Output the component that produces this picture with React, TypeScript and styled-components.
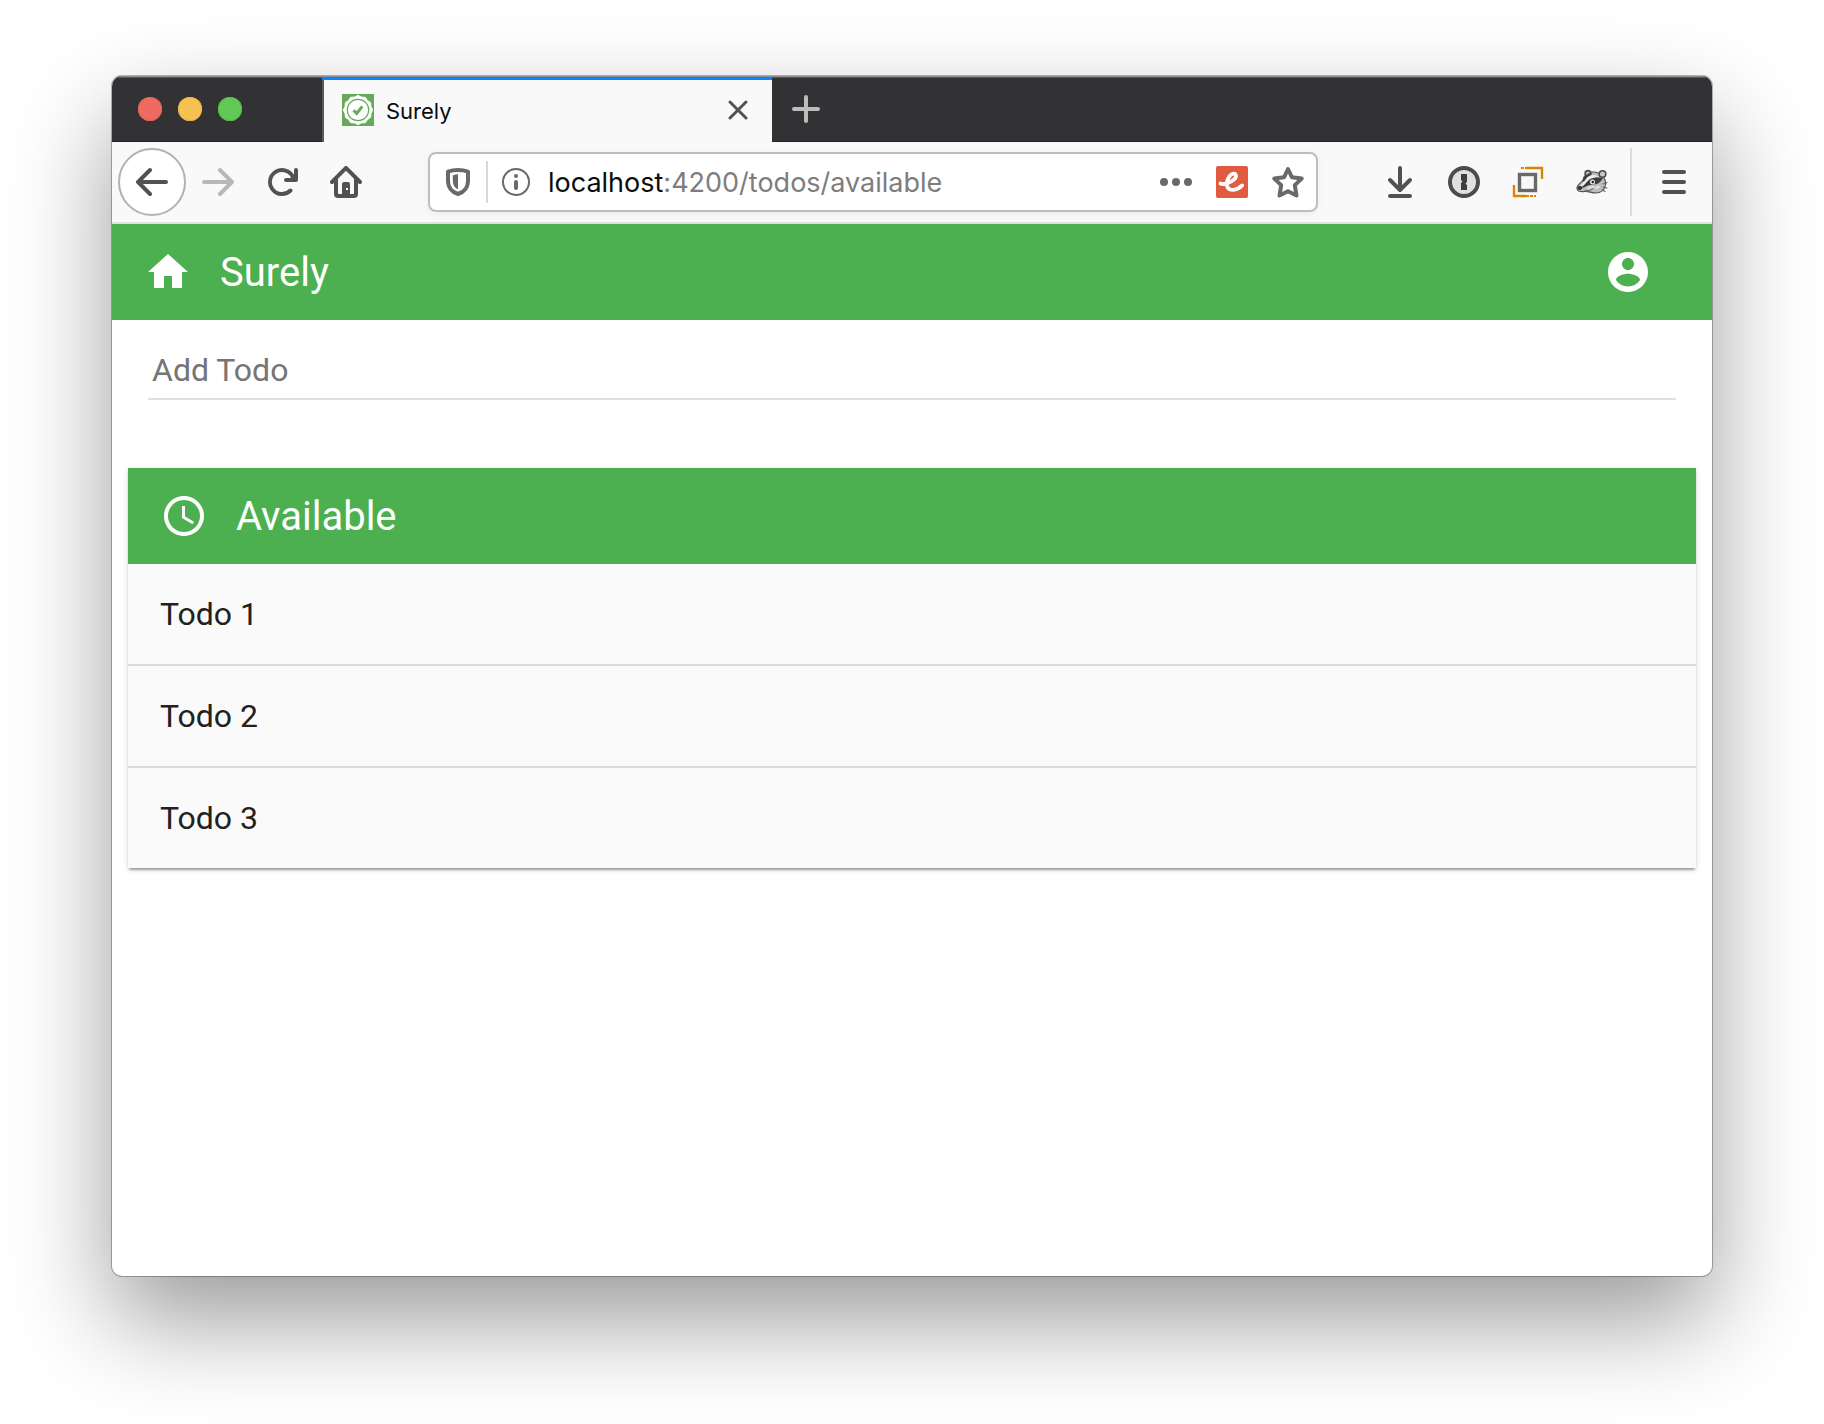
import React from "react";
import styled, { createGlobalStyle } from "styled-components";

const GlobalStyle = createGlobalStyle`
  *, *::before, *::after { box-sizing: border-box; }
  body { margin: 0; background: #fff; }
  button { border: 0; margin: 0; padding: 0; background: none; color: inherit; font: inherit; cursor: pointer; }
`;

const uiFont = `Inter, "Liberation Sans", sans-serif`;
const appFont = `Roboto, "Liberation Sans", sans-serif`;

const Desktop = styled.div`
  display: flex;
  min-height: 100vh;
  padding: 76px 112px 148px;
`;

const BrowserWindow = styled.div`
  flex: 1;
  min-width: 0;
  display: flex;
  flex-direction: column;
  overflow: hidden;
  border-radius: 10px;
  background: #fff;
  box-shadow: 0 0 0 1px rgba(0, 0, 0, 0.28), 0 44px 100px rgba(0, 0, 0, 0.4);
`;

const TabBar = styled.header`
  display: flex;
  align-items: center;
  height: 66px;
  background: #323234;
  box-shadow: inset 0 1px #8d8d8e, inset 0 2px #5b5b5d, inset 0 -1px #232325;
`;

const WindowControls = styled.div`
  display: flex;
  gap: 16px;
  width: 210px;
  padding-left: 26px;
`;

const WindowControl = styled.button<{ $color: string; $edge: string }>`
  width: 24px;
  height: 24px;
  border-radius: 50%;
  background: ${(p) => p.$color};
  box-shadow: inset 0 0 0 1px ${(p) => p.$edge};
`;

const Tab = styled.div`
  align-self: flex-end;
  display: flex;
  align-items: center;
  width: 450px;
  height: 65px;
  padding: 0 24px 2px 20px;
  border-top: 3px solid #0a84ff;
  background: #f9f9fa;
  box-shadow: inset 2px 0 #5a5a5c;
`;

const TabTitle = styled.span`
  flex: 1;
  margin-left: 12px;
  padding-top: 2px;
  font: 22px/28px ${uiFont};
  color: #0c0c0d;
`;

const IconButton = styled.button<{ $size: number; $color?: string }>`
  flex: none;
  display: flex;
  align-items: center;
  justify-content: center;
  width: ${(p) => p.$size}px;
  height: ${(p) => p.$size}px;
  color: ${(p) => p.$color ?? "#525255"};

  svg { display: block; }
`;

const Toolbar = styled.nav`
  display: flex;
  align-items: center;
  height: 82px;
  padding: 0 6px;
  border-bottom: 2px solid #e0e0e1;
  background: #f9f9fa;
`;

const BackButton = styled(IconButton)`
  border: 2px solid #b1b1b3;
  border-radius: 50%;
  background: #fff;
`;

const AddressBar = styled.div`
  flex: 1;
  min-width: 0;
  display: flex;
  align-items: center;
  height: 60px;
  margin: 0 50px;
  border: 2px solid #bebebe;
  border-radius: 8px;
  background: #fff;
  box-shadow: 0 2px 8px rgba(0, 0, 0, 0.05);
`;

const AddressDivider = styled.span`
  width: 2px;
  height: 42px;
  background: #d7d7db;
`;

const Address = styled.div`
  flex: 1;
  min-width: 0;
  overflow: hidden;
  white-space: nowrap;
  padding: 2px 0 0 4px;
  outline: none;
  font: 27px/36px ${uiFont};
  color: #0c0c0d;
`;

const AddressPath = styled.span`
  color: #7d7d7e;
`;

const ToolbarDivider = styled.span`
  width: 2px;
  height: 68px;
  margin: 0 10px 0 6px;
  background: #dcdcdd;
`;

const AppBar = styled.header<{ $wide?: boolean }>`
  display: flex;
  align-items: center;
  gap: 28px;
  height: 96px;
  padding: 0 ${(p) => (p.$wide ? 60 : 32)}px 0 32px;
  background: #4caf50;
  color: #fff;
`;

const HomeLink = styled.a`
  display: block;
  height: 48px;
  color: inherit;
`;

const BarTitle = styled.h1`
  flex: 1;
  margin: 0;
  padding-top: 2px;
  font: 400 40px/48px ${appFont};
`;

const CardTitle = styled(BarTitle).attrs({ as: "h2" })``;

const AddForm = styled.form`
  padding: 20px 36px 68px;
`;

const TodoInput = styled.input`
  display: block;
  width: 100%;
  height: 60px;
  padding: 2px 4px 0;
  border: 0;
  border-bottom: 2px solid #e0e0e0;
  outline: none;
  background: transparent;
  font: 32px/40px ${appFont};
  color: #212121;

  &::placeholder { color: #757575; opacity: 1; }
`;

const Card = styled.section`
  margin: 0 16px;
  background: #fafafa;
  box-shadow: 0 4px 2px -2px rgba(0, 0, 0, 0.2), 0 2px 2px rgba(0, 0, 0, 0.14), 0 2px 6px rgba(0, 0, 0, 0.12);
`;

const TodoList = styled.ul`
  margin: 0;
  padding: 0;
  list-style: none;
`;

const TodoRow = styled.li`
  padding: 30px 32px;
  font: 32px/40px ${appFont};
  color: #212121;

  & + & { border-top: 2px solid #dcdcdc; }
`;

const BackArrow = () => (
  <svg width="32" height="32" viewBox="0 0 16 16" fill="none" stroke="currentColor" strokeWidth="2" strokeLinecap="round" strokeLinejoin="round">
    <path d="M15 8H1.2M7 2L1 8l6 6" />
  </svg>
);

const ForwardArrow = () => (
  <svg width="32" height="32" viewBox="0 0 16 16" fill="none" stroke="currentColor" strokeWidth="2" strokeLinecap="round" strokeLinejoin="round">
    <path d="M1 8h13.8M9 2l6 6-6 6" />
  </svg>
);

const ReloadIcon = () => (
  <svg width="32" height="32" viewBox="0 0 16 16" fill="currentColor">
    <path d="M15 1a1 1 0 0 0-1 1v2.418A6.995 6.995 0 1 0 8 15a6.954 6.954 0 0 0 4.95-2.05 1 1 0 0 0-1.414-1.414A5.019 5.019 0 1 1 12.549 6H10a1 1 0 0 0 0 2h5a1 1 0 0 0 1-1V2a1 1 0 0 0-1-1z" />
  </svg>
);

const BrowserHomeIcon = () => (
  <svg width="32" height="32" viewBox="0 0 16 16" fill="currentColor" fillRule="evenodd">
    <path d="M15.707 7.293l-7-7a1 1 0 0 0-1.414 0l-7 7a1 1 0 0 0 1.414 1.414L2 8.414V14a2 2 0 0 0 2 2h8a2 2 0 0 0 2-2V8.414l.293.293a1 1 0 0 0 1.414-1.414zM12 13.5a.5.5 0 0 1-.5.5H10V9a1 1 0 0 0-1-1H7a1 1 0 0 0-1 1v5H4.5a.5.5 0 0 1-.5-.5V6.414l4-4 4 4zM8 11h1v1H8z" />
  </svg>
);

const ShieldIcon = () => (
  <svg width="32" height="32" viewBox="0 0 16 16">
    <path d="M8 2c1.8 0 3.6.3 5 .8V7.400c0 3.300-2 5.700-5 6.600-3-.9-5-3.300-5-6.600V2.800C4.400 2.300 6.200 2 8 2z" fill="none" stroke="currentColor" strokeWidth="2" strokeLinejoin="round" />
    <path d="M8 4.100v7.700C6.200 10.900 5.400 9.400 5.400 7.300V4.700C6.200 4.300 7.100 4.100 8 4.100z" fill="currentColor" />
  </svg>
);

const InfoIcon = () => (
  <svg width="32" height="32" viewBox="0 0 32 32" fill="currentColor">
    <circle cx="16" cy="16" r="13" fill="none" stroke="currentColor" strokeWidth="2" />
    <circle cx="16" cy="10" r="2" />
    <rect x="14" y="14" width="4" height="10" rx="2" />
  </svg>
);

const DotsIcon = () => (
  <svg width="32" height="32" viewBox="0 0 32 32" fill="currentColor">
    <circle cx="4" cy="16" r="4" />
    <circle cx="16" cy="16" r="4" />
    <circle cx="28" cy="16" r="4" />
  </svg>
);

const EmberIcon = () => (
  <svg width="32" height="32" viewBox="0 0 32 32">
    <rect width="32" height="32" rx="2" fill="#e15b40" />
    <path
      d="M4.500 17.500c2 1 4.500.5 7-.4 4.500-1.600 8.500-4.200 8.500-7 0-1.600-1-2.600-2.500-2.400-3.600.5-6.900 6-6.700 10.700.2 4.100 2.700 5.800 6.400 5.400 3.600-.4 6.500-1.900 9-4.400"
      fill="none" stroke="#fff" strokeWidth="3.800" strokeLinecap="round" strokeLinejoin="round"
    />
  </svg>
);

const StarIcon = () => (
  <svg width="32" height="32" viewBox="0 0 32 32" fill="none" stroke="currentColor" strokeWidth="4" strokeLinejoin="round">
    <path d="M16 3l4 8.300 9.700 1.300-6.900 6.500 1.700 10.400L16 25.200l-8.500 4.300 1.700-10.400-6.900-6.500L12 11.300z" />
  </svg>
);

const DownloadIcon = () => (
  <svg width="32" height="32" viewBox="0 0 32 32" fill="none" stroke="currentColor" strokeWidth="4" strokeLinecap="round" strokeLinejoin="round">
    <path d="M16 2v21M6 14l10 10 10-10M6 30h20" />
  </svg>
);

const KeyholeIcon = () => (
  <svg width="32" height="32" viewBox="0 0 32 32">
    <circle cx="16" cy="16" r="14" fill="#e0e0e1" stroke="#4c4c4e" strokeWidth="4" />
    <path d="M13 8h6v8l-1.500 1.500L19 19v5h-6v-7l1.500-1.500L13 14z" fill="#3f3f41" />
  </svg>
);

const FrameIcon = () => (
  <svg width="32" height="32" viewBox="0 0 32 32" fill="none">
    <rect x="7.500" y="8.500" width="16" height="16" stroke="#696969" strokeWidth="3.400" />
    <path d="M14 2h16v11M2 19v11h12" stroke="#d98407" strokeWidth="2.400" />
    <path d="M9 2h5M14 30h10" stroke="#d98407" strokeWidth="2" strokeDasharray="3 1" />
  </svg>
);

const BadgerIcon = () => (
  <svg width="32" height="32" viewBox="0 0 32 32" strokeLinecap="round" strokeLinejoin="round">
    <path d="M1 22c0-3 3-4.500 6-7.500C8 9 12 6 17 6c5 0 8 2 10 5 2 2 3 5 2.500 8-1 5-5 8-10 8-4.500 0-7-2-11-1.500C5 26 1 25.500 1 22z" fill="#bdbdbd" stroke="#555" strokeWidth="1.200" />
    <circle cx="12" cy="7.500" r="2.900" fill="#bbb" stroke="#4a4a4a" strokeWidth="1.600" />
    <circle cx="26.500" cy="8" r="3.300" fill="#c8c8c8" stroke="#4a4a4a" strokeWidth="1.600" />
    <path d="M3.500 20.500C7 18 8.500 12 14 9.500c3-1 6.500-.5 9 1-4 .5-7 1.500-10 4C10 17 8 20.500 3.500 20.500z" fill="#ededed" />
    <path d="M5 21.500c4-2 5.500-6.500 9.500-8.500 4-1.700 8.500-2 12.500-.5-2 2-3.500 5-6.500 5.500-4.500 1-8 .5-11.500 3-1.500.8-3 1-4 .5z" fill="#3c3c3c" />
    <path d="M7.500 14.500C9 11 10.500 9.500 14 8" fill="none" stroke="#3c3c3c" strokeWidth="2" />
    <circle cx="16.500" cy="16" r="2.500" fill="#e5e5e5" />
    <circle cx="16.800" cy="16" r="1.200" fill="#222" />
    <path d="M1.500 22c.5-2.500 3.500-2.500 5-.5-.5 2.500-3.500 4-5 .5z" fill="#333" />
    <path d="M9 24.500c3 .5 6 .5 8-2M27 18l4-1.500M27 21l4 1M26 24l3 1.500" fill="none" stroke="#666" strokeWidth="1.100" />
    <path d="M12 22c2-1 4-1.300 6-1M20 22l3-1.500" fill="none" stroke="#eee" strokeWidth="1.400" />
  </svg>
);

const MenuIcon = () => (
  <svg width="32" height="32" viewBox="0 0 32 32" fill="none" stroke="currentColor" strokeWidth="4" strokeLinecap="round">
    <path d="M6 6h20M6 16h20M6 26h20" />
  </svg>
);

const CloseIcon = () => (
  <svg width="20" height="20" viewBox="0 0 20 20" fill="none" stroke="currentColor" strokeWidth="3" strokeLinecap="round">
    <path d="M2 2l16 16M18 2L2 18" />
  </svg>
);

const PlusIcon = () => (
  <svg width="28" height="28" viewBox="0 0 28 28" fill="none" stroke="currentColor" strokeWidth="4" strokeLinecap="round">
    <path d="M14 2v24M2 14h24" />
  </svg>
);

const sealPoints = Array.from({ length: 24 }, (_, i) => {
  const radius = i % 2 === 0 ? 14.6 : 13.4;
  const angle = (i * Math.PI) / 12 - Math.PI / 2;
  return `${(16 + radius * Math.cos(angle)).toFixed(2)},${(16 + radius * Math.sin(angle)).toFixed(2)}`;
}).join(" ");

const SealIcon = () => (
  <svg width="32" height="32" viewBox="0 0 32 32">
    <rect width="32" height="32" fill="#66a95a" />
    <polygon points={sealPoints} fill="#fff" stroke="#fff" strokeWidth="1" strokeLinejoin="round" />
    <circle cx="16" cy="16" r="10.700" fill="none" stroke="#66a95a" strokeWidth="1.200" />
    <path d="M11.500 16.200l3.200 3.200 5.600-7" fill="none" stroke="#66a95a" strokeWidth="3" />
  </svg>
);

const MaterialIcon = ({ d }: { d: string }) => (
  <svg width="48" height="48" viewBox="0 0 24 24" fill="currentColor" display="block">
    <path d={d} />
  </svg>
);

const homePath = "M10 20v-6h4v6h5v-8h3L12 3 2 12h3v8z";
const accountPath =
  "M12 2C6.480 2 2 6.480 2 12s4.480 10 10 10 10-4.480 10-10S17.520 2 12 2zm0 3c1.660 0 3 1.340 3 3s-1.340 3-3 3-3-1.340-3-3 1.340-3 3-3zm0 14.200c-2.500 0-4.710-1.280-6-3.220.03-1.990 4-3.080 6-3.080 1.990 0 5.970 1.090 6 3.080-1.290 1.940-3.500 3.220-6 3.220z";
const clockPath =
  "M11.990 2C6.470 2 2 6.480 2 12s4.470 10 9.990 10C17.520 22 22 17.520 22 12S17.520 2 11.990 2zM12 20c-4.420 0-8-3.580-8-8s3.580-8 8-8 8 3.580 8 8-3.580 8-8 8zm.5-13H11v6l5.250 3.150.75-1.230-4.500-2.670z";

const todos = ["Todo 1", "Todo 2", "Todo 3"];

export default function App() {
  return (
    <>
      <GlobalStyle />
      <Desktop>
        <BrowserWindow>
          <TabBar>
            <WindowControls>
              <WindowControl aria-label="Close window" $color="#ed6b60" $edge="#e2655a" />
              <WindowControl aria-label="Minimize window" $color="#f5c150" $edge="#e9b548" />
              <WindowControl aria-label="Zoom window" $color="#62c956" $edge="#58bb4c" />
            </WindowControls>
            <Tab>
              <SealIcon />
              <TabTitle>Surely</TabTitle>
              <IconButton $size={20} aria-label="Close tab"><CloseIcon /></IconButton>
            </Tab>
            <IconButton $size={68} $color="#bcbcbd" aria-label="New tab"><PlusIcon /></IconButton>
          </TabBar>

          <Toolbar>
            <BackButton $size={68} aria-label="Back"><BackArrow /></BackButton>
            <IconButton $size={64} $color="#b8b8b9" aria-label="Forward"><ForwardArrow /></IconButton>
            <IconButton $size={64} aria-label="Reload"><ReloadIcon /></IconButton>
            <IconButton $size={64} aria-label="Home"><BrowserHomeIcon /></IconButton>
            <AddressBar>
              <IconButton $size={56} $color="#69696a" aria-label="Tracking protection"><ShieldIcon /></IconButton>
              <AddressDivider />
              <IconButton $size={56} $color="#69696a" aria-label="Site information"><InfoIcon /></IconButton>
              <Address role="textbox" aria-label="Address" contentEditable suppressContentEditableWarning>
                localhost<AddressPath>:4200/todos/available</AddressPath>
              </Address>
              <IconButton $size={56} $color="#69696a" aria-label="Page actions"><DotsIcon /></IconButton>
              <IconButton $size={56} aria-label="Ember Inspector"><EmberIcon /></IconButton>
              <IconButton $size={56} $color="#69696a" aria-label="Bookmark"><StarIcon /></IconButton>
            </AddressBar>
            <IconButton $size={64} aria-label="Downloads"><DownloadIcon /></IconButton>
            <IconButton $size={64} aria-label="Passwords"><KeyholeIcon /></IconButton>
            <IconButton $size={64} aria-label="Containers"><FrameIcon /></IconButton>
            <IconButton $size={64} aria-label="Privacy Badger"><BadgerIcon /></IconButton>
            <ToolbarDivider />
            <IconButton $size={64} aria-label="Menu"><MenuIcon /></IconButton>
          </Toolbar>

          <AppBar $wide>
            <HomeLink href="#home" aria-label="Home"><MaterialIcon d={homePath} /></HomeLink>
            <BarTitle>Surely</BarTitle>
            <IconButton $size={48} $color="#fff" aria-label="Account"><MaterialIcon d={accountPath} /></IconButton>
          </AppBar>

          <main>
            <AddForm onSubmit={(event) => event.preventDefault()}>
              <TodoInput type="text" placeholder="Add Todo" aria-label="Add Todo" />
            </AddForm>
            <Card>
              <AppBar>
                <MaterialIcon d={clockPath} />
                <CardTitle>Available</CardTitle>
              </AppBar>
              <TodoList>
                {todos.map((todo) => (
                  <TodoRow key={todo}>{todo}</TodoRow>
                ))}
              </TodoList>
            </Card>
          </main>
        </BrowserWindow>
      </Desktop>
    </>
  );
}
